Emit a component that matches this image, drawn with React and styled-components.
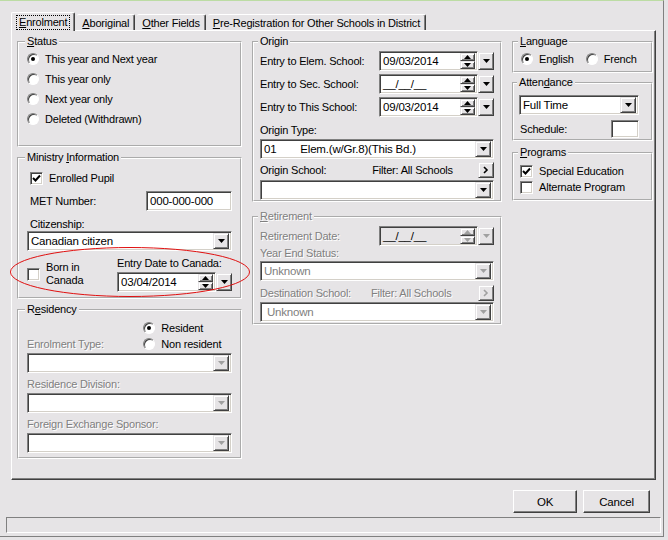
import React from 'react';
import styled, { createGlobalStyle } from 'styled-components';

const GlobalStyle = createGlobalStyle`
  body {
    margin: 0;
    background: #e6e4e6;
    font-family: "Liberation Sans", Arial, sans-serif;
    font-size: 11px;
    letter-spacing: -0.2px;
    color: #000;
  }
`;

const Screen = styled.div`
  position: relative;
  width: 668px;
  height: 540px;
  background: #e6e4e6;
  overflow: hidden;
`;

const Frame = styled.div`
  width: 664px;
  height: 537px;
  box-sizing: border-box;
  border-top: 1px solid #bcdca4;
  border-right: 1px solid #808080;
  border-bottom: 1px solid #808080;
  display: flex;
  flex-direction: column;
`;

const TabBar = styled.div`
  display: flex;
  align-items: flex-end;
  gap: 2px;
  height: 29px;
  padding-left: 11px;
  position: relative;
  z-index: 1;
`;

const Tab = styled.div`
  height: ${p => (p.$active ? 19 : 16)}px;
  margin-bottom: ${p => (p.$active ? -1 : 0)}px;
  box-sizing: border-box;
  padding: 0 5px;
  display: flex;
  align-items: center;
  background: #e6e4e6;
  border-top: 1px solid #fff;
  border-left: ${p => (p.$first ? '1px solid #fff' : 'none')};
  border-right: 1px solid #404040;
  box-shadow: inset -1px 0 0 #808080;
  border-radius: 2px 2px 0 0;
`;

const FocusText = styled.span`
  outline: 1px dotted #000;
  padding: 0 2px;
  line-height: 13px;
`;

const Panel = styled.div`
  margin-left: 11px;
  width: 645px;
  height: 450px;
  box-sizing: border-box;
  border-top: 1px solid #fff;
  border-left: 1px solid #fff;
  border-right: 1px solid #404040;
  border-bottom: 1px solid #404040;
  box-shadow: inset -1px -1px 0 #808080;
`;

const Columns = styled.div`
  display: flex;
  gap: 10px;
  padding: 4px 0 0 5px;
`;

const Column = styled.div`
  display: flex;
  flex-direction: column;
  width: ${p => p.$w}px;
`;

const Group = styled.fieldset`
  box-sizing: border-box;
  margin: ${p => p.$mt || 0}px 0 0 0;
  height: ${p => p.$h}px;
  min-width: 0;
  border: 2px groove #fff;
  padding: 0 ${p => p.$pr ?? 8}px 0 ${p => p.$pl ?? 8}px;
  display: flex;
  flex-direction: column;
`;

const Legend = styled.legend`
  padding: 0 2px;
  margin-left: -2px;
  line-height: 13px;
  color: ${p => (p.$disabled ? '#808080' : '#000')};
  text-shadow: ${p => (p.$disabled ? '1px 1px 0 #fff' : 'none')};
`;

const U = styled.span`
  text-decoration: underline;
`;

const Row = styled.div`
  display: flex;
  align-items: center;
  height: ${p => p.$h || 20}px;
  margin-top: ${p => p.$mt || 0}px;
  padding-left: ${p => p.$pl || 0}px;
  gap: ${p => p.$gap || 0}px;
  flex: none;
`;

const Label = styled.span`
  white-space: nowrap;
  line-height: 13px;
  color: ${p => (p.$disabled ? '#808080' : '#000')};
  text-shadow: ${p => (p.$disabled ? '1px 1px 0 #fff' : 'none')};
  margin-left: ${p => p.$ml || 0}px;
`;

const Spacer = styled.div`
  flex: 1;
`;

const RadioCircle = styled.span`
  position: relative;
  flex: none;
  width: 12px;
  height: 12px;
  box-sizing: border-box;
  border-radius: 50%;
  background: #fff;
  border: 1px solid;
  border-color: #808080 #fff #fff #808080;
  box-shadow: inset 1px 1px 0 #404040;
  margin-right: 6px;
  margin-left: ${p => p.$ml || 0}px;
  &::after {
    content: '';
    display: ${p => (p.$checked ? 'block' : 'none')};
    position: absolute;
    left: 3px;
    top: 3px;
    width: 4px;
    height: 4px;
    border-radius: 50%;
    background: #000;
  }
`;

const Box = styled.span`
  flex: none;
  width: 13px;
  height: 13px;
  box-sizing: border-box;
  background: #fff;
  border: 1px solid;
  border-color: #808080 #fff #fff #808080;
  box-shadow: inset 1px 1px 0 #404040, inset -1px -1px 0 #d4d0c8;
  margin-right: ${p => p.$mr ?? 6}px;
  display: flex;
  align-items: center;
  justify-content: center;
`;

const Field = styled.div`
  display: flex;
  align-items: center;
  box-sizing: border-box;
  width: ${p => (p.$w ? `${p.$w}px` : 'auto')};
  height: ${p => p.$h || 20}px;
  margin-top: ${p => p.$mt || 0}px;
  margin-left: ${p => p.$ml || 0}px;
  background: ${p => (p.$grey ? '#e6e4e6' : '#fff')};
  border: 1px solid;
  border-color: #808080 #fff #fff #808080;
  box-shadow: inset 1px 1px 0 #404040, inset -1px -1px 0 #d4d0c8;
  padding: 2px 2px 2px ${p => p.$pl ?? 3}px;
  flex: none;
`;

const FieldText = styled.span`
  flex: 1;
  white-space: nowrap;
  line-height: 14px;
  font-size: 11.5px;
  color: ${p => (p.$disabled ? '#808080' : '#000')};
`;

const Btn = styled.div`
  flex: none;
  box-sizing: border-box;
  width: ${p => p.$w || 16}px;
  height: ${p => p.$h || 16}px;
  background: #e6e4e6;
  border: 1px solid;
  border-color: #e6e4e6 #404040 #404040 #e6e4e6;
  box-shadow: inset 1px 1px 0 #fff, inset -1px -1px 0 #808080;
  display: flex;
  align-items: center;
  justify-content: center;
`;

const SpinStack = styled.div`
  display: flex;
  flex-direction: column;
  margin-left: auto;
`;

const DateBox = styled.div`
  display: flex;
  align-items: center;
  margin-top: ${p => p.$mt || 0}px;
  margin-left: ${p => (p.$auto ? 'auto' : '0')};
  flex: none;
`;

const ButtonBar = styled.div`
  display: flex;
  justify-content: flex-end;
  gap: 6px;
  padding-right: 13px;
  margin-top: 10px;
`;

const PushButton = styled.div`
  box-sizing: border-box;
  width: ${p => p.$w}px;
  height: 23px;
  display: flex;
  align-items: center;
  justify-content: center;
  border: 1px solid;
  border-color: #fff #404040 #404040 #fff;
  box-shadow: inset -1px -1px 0 #808080;
  font-size: 11.5px;
`;

const StatusBar = styled.div`
  margin: 4px 2px 0 6px;
  height: 16px;
  box-sizing: border-box;
  border: 1px solid;
  border-color: #808080 #fff #fff #808080;
`;

const Ellipse = styled.svg`
  position: absolute;
  left: 9px;
  top: 246px;
  pointer-events: none;
`;

const TwoLine = styled.div`
  line-height: 13px;
`;

const Down = ({ disabled }) => (
  <svg width="7" height="4" viewBox="0 0 7 4">
    <polygon points="0,0 7,0 3.5,4" fill={disabled ? '#a0a0a0' : '#000'} />
  </svg>
);

const Up = ({ disabled }) => (
  <svg width="7" height="4" viewBox="0 0 7 4">
    <polygon points="0,4 7,4 3.5,0" fill={disabled ? '#a0a0a0' : '#000'} />
  </svg>
);

const Chevron = ({ disabled }) => (
  <svg width="6" height="8" viewBox="0 0 6 8">
    <polyline points="1,1 4,4 1,7" fill="none" stroke={disabled ? '#a0a0a0' : '#000'} strokeWidth="1.6" />
  </svg>
);

const Check = () => (
  <svg width="9" height="9" viewBox="0 0 9 9">
    <polyline points="1,4 3.5,6.5 8,1.5" fill="none" stroke="#000" strokeWidth="2" />
  </svg>
);

const Radio = ({ checked, children, mt, h, pl }) => (
  <Row $mt={mt} $h={h || 20} $pl={pl}>
    <RadioCircle $checked={checked} />
    <Label>{children}</Label>
  </Row>
);

const CheckItem = ({ checked, children, mt, h, pl }) => (
  <Row $mt={mt} $h={h || 16} $pl={pl}>
    <Box>{checked && <Check />}</Box>
    <Label>{children}</Label>
  </Row>
);

const Combo = ({ text, disabled, mt, pl, w }) => (
  <Field $mt={mt} $pl={pl} $w={w}>
    <FieldText $disabled={disabled}>{text}</FieldText>
    <Btn $w={16} $h={16}>
      <Down disabled={disabled} />
    </Btn>
  </Field>
);

const DateField = ({ value, disabled, mt, auto, w = 99 }) => (
  <DateBox $mt={mt} $auto={auto}>
    <Field $w={w} $grey={disabled} $pl={3}>
      <FieldText $disabled={false}>{value}</FieldText>
      <SpinStack>
        <Btn $w={15} $h={8}><Up disabled={disabled} /></Btn>
        <Btn $w={15} $h={8}><Down disabled={disabled} /></Btn>
      </SpinStack>
    </Field>
    <Btn $w={16} $h={18}>
      <Down disabled={disabled} />
    </Btn>
  </DateBox>
);

const App = () => {
  return (
    <Screen>
      <GlobalStyle />
      <Frame>
        <TabBar>
          <Tab $active $first><FocusText><U>E</U>nrolment</FocusText></Tab>
          <Tab><U>A</U>boriginal</Tab>
          <Tab><U>O</U>ther Fields</Tab>
          <Tab><U>P</U>re-Registration for Other Schools in District</Tab>
        </TabBar>
        <Panel>
          <Columns>
            <Column $w={225}>
              <Group $h={112}>
                <Legend><U>S</U>tatus</Legend>
                <Radio checked mt={1}>This year and Next year</Radio>
                <Radio>This year only</Radio>
                <Radio>Next year only</Radio>
                <Radio>Deleted (Withdrawn)</Radio>
              </Group>
              <Group $h={148} $mt={4}>
                <Legend>Ministry <U>I</U>nformation</Legend>
                <CheckItem checked mt={4} h={20} pl={3}>Enrolled Pupil</CheckItem>
                <Row $mt={2} $h={22} $pl={3}>
                  <Label>MET Number:</Label>
                  <Spacer />
                  <Field $w={86}><FieldText>000-000-000</FieldText></Field>
                </Row>
                <Row $mt={5} $h={14} $pl={3}>
                  <Label>Citizenship:</Label>
                </Row>
                <Combo text="Canadian citizen" />
                <Row $h={40} $mt={3}>
                  <Row $h={40}>
                    <Box>{null}</Box>
                    <TwoLine>Born in<br />Canada</TwoLine>
                  </Row>
                  <Spacer />
                  <Column $w={115}>
                    <Row $h={14}><Label>Entry Date to Canada:</Label></Row>
                    <DateField value="03/04/2014" mt={2} />
                  </Column>
                </Row>
              </Group>
              <Group $h={156} $mt={4}>
                <Legend>R<U>e</U>sidency</Legend>
                <Row $mt={4} $h={32}>
                  <Column $w={115}>
                    <Row $h={16} />
                    <Row $h={16}><Label $disabled>Enrolment Type:</Label></Row>
                  </Column>
                  <Column $w={95}>
                    <Radio checked h={16} pl={4}>Resident</Radio>
                    <Radio h={16} pl={4}>Non resident</Radio>
                  </Column>
                </Row>
                <Combo mt={1} disabled />
                <Row $mt={4} $h={14}><Label $disabled>Residence Division:</Label></Row>
                <Combo mt={2} disabled />
                <Row $mt={4} $h={14}><Label $disabled>Foreign Exchange Sponsor:</Label></Row>
                <Combo mt={2} disabled />
              </Group>
            </Column>

            <Column $w={250}>
              <Group $h={167} $pl={6} $pr={6}>
                <Legend>Origin</Legend>
                <Row $mt={3}>
                  <Label>Entry to Elem. School:</Label>
                  <DateField value="09/03/2014" auto />
                </Row>
                <Row $mt={3}>
                  <Label>Entry to Sec. School:</Label>
                  <DateField value="__/__/__" auto />
                </Row>
                <Row $mt={3}>
                  <Label>Entry to This School:</Label>
                  <DateField value="09/03/2014" auto />
                </Row>
                <Row $mt={6} $h={14}><Label>Origin Type:</Label></Row>
                <Combo mt={2} text={<>01&nbsp;&nbsp;&nbsp;&nbsp;&nbsp;&nbsp;&nbsp;&nbsp;Elem.(w/Gr.8)(This Bd.)</>} />
                <Row $mt={3} $h={16}>
                  <Label>Origin School:</Label>
                  <Label $ml={46}>Filter: All Schools</Label>
                  <Spacer />
                  <Btn $w={16} $h={16}><Chevron /></Btn>
                </Row>
                <Combo mt={2} />
              </Group>
              <Group $h={115} $mt={8} $pl={6} $pr={6}>
                <Legend $disabled><U>R</U>etirement</Legend>
                <Row $mt={3}>
                  <Label $disabled>Retirement Date:</Label>
                  <DateField value="__/__/__" auto disabled />
                </Row>
                <Row $h={14}><Label $disabled>Year End Status:</Label></Row>
                <Combo mt={1} text="Unknown" disabled />
                <Row $mt={4} $h={16}>
                  <Label $disabled>Destination School:</Label>
                  <Label $disabled $ml={20}>Filter: All Schools</Label>
                  <Spacer />
                  <Btn $w={16} $h={16}><Chevron disabled /></Btn>
                </Row>
                <Combo mt={1} text="Unknown" disabled pl={6} />
              </Group>
            </Column>

            <Column $w={141}>
              <Group $h={38} $pl={6}>
                <Legend><U>L</U>anguage</Legend>
                <Row $mt={2} $h={18} $pl={1}>
                  <RadioCircle $checked />
                  <Label>English</Label>
                  <RadioCircle $checked={false} $ml={12} />
                  <Label>French</Label>
                </Row>
              </Group>
              <Group $h={65} $mt={3} $pl={5} $pr={12}>
                <Legend>Atten<U>d</U>ance</Legend>
                <Combo mt={6} text="Full Time" />
                <Row $mt={5} $h={18} $pl={1}>
                  <Label>Schedule:</Label>
                  <Spacer />
                  <Field $w={28} $h={18} />
                </Row>
              </Group>
              <Group $h={55} $mt={5} $pl={6}>
                <Legend><U>P</U>rograms</Legend>
                <CheckItem checked mt={4}>Special Education</CheckItem>
                <CheckItem>Alternate Program</CheckItem>
              </Group>
            </Column>
          </Columns>
        </Panel>
        <ButtonBar>
          <PushButton $w={64}>OK</PushButton>
          <PushButton $w={67}>Cancel</PushButton>
        </ButtonBar>
        <StatusBar />
      </Frame>
      <Ellipse width="244" height="52" viewBox="0 0 244 52">
        <ellipse cx="121" cy="26" rx="119.5" ry="24.5" fill="none" stroke="#e01010" strokeWidth="1" />
      </Ellipse>
    </Screen>
  );
};

export default App;
